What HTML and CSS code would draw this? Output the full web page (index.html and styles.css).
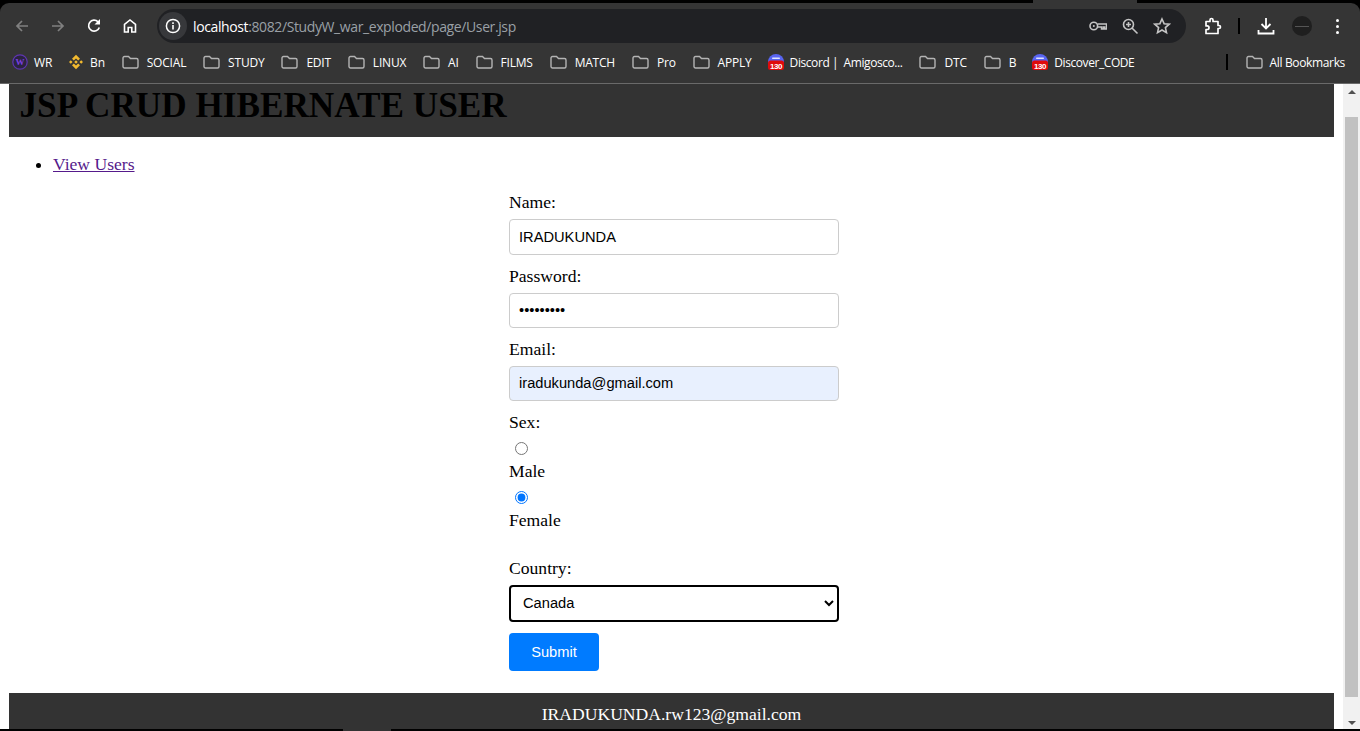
FILE: index.html
```html
<!DOCTYPE html>
<html lang="en">
<head>
<meta charset="utf-8">
<title>User</title>
<link rel="stylesheet" href="styles.css">
</head>
<body>
<svg class="defs" width="0" height="0" aria-hidden="true">
  <symbol id="folder" viewBox="0 0 17 14">
    <path d="M1 3a1.500 1.500 0 0 1 1.500-1.500h4l2 2h6a1.500 1.500 0 0 1 1.500 1.500v6.500a1.500 1.500 0 0 1-1.500 1.500h-12a1.500 1.500 0 0 1-1.500-1.500z" fill="none" stroke="#b4b4b4" stroke-width="1.400"/>
  </symbol>
</svg>
<div class="window">
  <div class="tab-gap"></div>
  <header class="chrome">
    <div class="toolbar">
      <svg class="tb-icon" viewBox="0 0 16 16"><path d="M14 8H3M8 3 3 8l5 5" fill="none" stroke="#808080" stroke-width="1.700"/></svg>
      <svg class="tb-icon" viewBox="0 0 16 16"><path d="M2 8h11M8 3l5 5-5 5" fill="none" stroke="#808080" stroke-width="1.700"/></svg>
      <svg class="tb-icon" viewBox="0 0 16 16"><path d="M13.300 9.500A5.500 5.500 0 1 1 12 3.800" fill="none" stroke="#fff" stroke-width="1.700"/><path d="M14 1v5.500H8.500z" fill="#fff"/></svg>
      <svg class="tb-icon" viewBox="0 0 16 16"><path d="M2.500 14V6.500L8 2l5.500 4.500V14h-3.700V9.500H6.200V14z" fill="none" stroke="#fff" stroke-width="1.600"/></svg>
      <div class="omnibox">
        <span class="info"><svg viewBox="0 0 16 16" width="16" height="16"><circle cx="8" cy="8" r="6.600" fill="none" stroke="#fff" stroke-width="1.500"/><path d="M7.200 7h1.600v4.500H7.200zM7.200 4.300h1.600v1.600H7.200z" fill="#fff"/></svg></span>
        <span class="url"><span class="host">localhost</span>:8082/StudyW_war_exploded/page/User.jsp</span>
        <svg class="omni-icon" viewBox="0 0 18 18"><circle cx="4.800" cy="9" r="3.800" fill="none" stroke="#c4c4c4" stroke-width="1.600"/><circle cx="4.800" cy="9" r="1" fill="#c4c4c4"/><path d="M8.500 7h9v5h-1.800v-2h-1.500v2h-1.700v-2H8.500" fill="none" stroke="#c4c4c4" stroke-width="1.500"/></svg>
        <svg class="omni-icon" viewBox="0 0 18 18"><circle cx="7.500" cy="7.500" r="5" fill="none" stroke="#c4c4c4" stroke-width="1.600"/><path d="m11 11 5.500 5.500M5 7.500h5M7.500 5v5" fill="none" stroke="#c4c4c4" stroke-width="1.600"/></svg>
        <svg class="omni-icon" viewBox="0 0 18 18"><path d="m9 2 2.100 4.700 5.100.5-3.800 3.400 1.100 5L9 13l-4.500 2.600 1.100-5-3.800-3.400 5.100-.5z" fill="none" stroke="#c4c4c4" stroke-width="1.600"/></svg>
      </div>
      <div class="tb-right">
        <svg class="tb-icon" viewBox="0 0 18 18"><path d="M2 4.500h4V3a1.500 1.500 0 0 1 3 0v1.500h5v4h1a1.500 1.500 0 0 1 0 3h-1v5H2v-4h1.200a1.800 1.800 0 0 0 0-3.600H2z" fill="none" stroke="#fff" stroke-width="1.700" stroke-linejoin="round"/></svg>
        <span class="tb-sep"></span>
        <svg class="tb-icon" viewBox="0 0 18 18"><path d="M9 1v10M4.500 7 9 11.500 13.500 7M1.500 13v3.500h15V13" fill="none" stroke="#fff" stroke-width="1.800"/></svg>
        <span class="avatar"><span class="avatar-line"></span></span>
        <span class="dots"><i></i><i></i><i></i></span>
      </div>
    </div>
    <nav class="bookmarks">
      <a class="bm fav"><svg class="bm-icon" viewBox="0 0 16 16"><circle cx="8" cy="8" r="7.200" fill="#2b2440" stroke="#5e35b1" stroke-width="1.200"/><text x="8" y="11" text-anchor="middle" class="wr">W</text></svg>WR</a>
      <a class="bm fav"><svg class="bm-icon" viewBox="0 0 16 16"><path d="M8 .8l4 4-1.800 1.800L8 4.400 5.800 6.600 4 4.800zM8 15.200l-4-4 1.800-1.800L8 11.600l2.200-2.200 1.800 1.800zM2.800 6.200 4.600 8 2.800 9.800 1 8zM13.200 6.200 15 8l-1.800 1.800L11.400 8zM8 6.200 9.800 8 8 9.800 6.200 8z" fill="#f3ba2f"/></svg>Bn</a>
      <a class="bm"><svg class="bm-folder"><use href="#folder"/></svg>SOCIAL</a>
      <a class="bm"><svg class="bm-folder"><use href="#folder"/></svg>STUDY</a>
      <a class="bm"><svg class="bm-folder"><use href="#folder"/></svg>EDIT</a>
      <a class="bm"><svg class="bm-folder"><use href="#folder"/></svg>LINUX</a>
      <a class="bm"><svg class="bm-folder"><use href="#folder"/></svg>AI</a>
      <a class="bm"><svg class="bm-folder"><use href="#folder"/></svg>FILMS</a>
      <a class="bm"><svg class="bm-folder"><use href="#folder"/></svg>MATCH</a>
      <a class="bm"><svg class="bm-folder"><use href="#folder"/></svg>Pro</a>
      <a class="bm"><svg class="bm-folder"><use href="#folder"/></svg>APPLY</a>
      <a class="bm fav tight"><svg class="bm-icon" viewBox="0 0 16 16"><circle cx="8" cy="8" r="8" fill="#5865f2"/><rect x="4" y="3.500" width="8" height="1.500" rx=".7" fill="#dfe3ff"/><rect x="0" y="6.500" width="16" height="9.500" rx="2.500" fill="#e00b0b"/><text x="8" y="14.500" text-anchor="middle" class="badge">130</text></svg>Discord |&nbsp; Amigosco...</a>
      <a class="bm"><svg class="bm-folder"><use href="#folder"/></svg>DTC</a>
      <a class="bm"><svg class="bm-folder"><use href="#folder"/></svg>B</a>
      <a class="bm fav tight"><svg class="bm-icon" viewBox="0 0 16 16"><circle cx="8" cy="8" r="8" fill="#5865f2"/><rect x="4" y="3.500" width="8" height="1.500" rx=".7" fill="#dfe3ff"/><rect x="0" y="6.500" width="16" height="9.500" rx="2.500" fill="#e00b0b"/><text x="8" y="14.500" text-anchor="middle" class="badge">130</text></svg>Discover_CODE</a>
      <span class="bm-spacer"></span>
      <span class="bm-sep"></span>
      <a class="bm bm-all"><svg class="bm-folder"><use href="#folder"/></svg>All Bookmarks</a>
    </nav>
  </header>
  <div class="viewport">
    <main class="page">
      <div class="site-header"><h1>JSP CRUD HIBERNATE USER</h1></div>
      <ul class="links"><li><a href="#">View Users</a></li></ul>
      <div class="form-wrap">
        <form class="user-form" onsubmit="return false">
          <div class="field">
            <label class="lbl" for="name">Name:</label>
            <input class="ctl" id="name" type="text" value="IRADUKUNDA">
          </div>
          <div class="field">
            <label class="lbl" for="pw">Password:</label>
            <input class="ctl" id="pw" type="password" value="secret123">
          </div>
          <div class="field">
            <label class="lbl" for="email">Email:</label>
            <input class="ctl autofilled" id="email" type="email" value="iradukunda@gmail.com">
          </div>
          <div class="group">
            <div class="lbl-plain">Sex:</div>
            <input class="radio" id="male" type="radio" name="sex">
            <label class="radio-lbl" for="male">Male</label>
            <input class="radio" id="female" type="radio" name="sex" checked>
            <label class="radio-lbl" for="female">Female</label>
          </div>
          <div class="field">
            <label class="lbl" for="country">Country:</label>
            <select class="sel" id="country"><option>Canada</option></select>
          </div>
          <button class="submit" type="submit">Submit</button>
        </form>
      </div>
      <footer class="site-footer">IRADUKUNDA.rw123@gmail.com</footer>
    </main>
    <aside class="scrollbar">
      <span class="arrow-up"></span>
      <span class="thumb"></span>
      <span class="arrow-down"></span>
    </aside>
  </div>
  <div class="bottom-edge"><span class="edge"></span><span class="edge-gap"></span><span class="edge"></span></div>
</div>
</body>
</html>
```
FILE: styles.css
```css
* { box-sizing: border-box; }
html, body { margin: 0; padding: 0; height: 100%; overflow: hidden; background: #000; }
.defs { position: absolute; }
.badge { font: bold 8px "Liberation Sans", sans-serif; fill: #fff; }
.wr { font: bold 9px "Liberation Serif", serif; fill: #7b3fe0; }

.window { position: relative; display: flex; flex-direction: column; width: 1360px; height: 731px; padding-top: 3px; background: #000; }
.tab-gap { position: absolute; left: 1033px; top: 0; width: 104px; height: 3px; background: #353535; }

.chrome { flex: none; height: 81px; background: #353535; border-radius: 9px 9px 0 0; border-bottom: 1px solid #6a6a6a; font-family: "Open Sans", "Liberation Sans", sans-serif; color: #fff; }
.toolbar { display: flex; align-items: center; height: 40px; padding: 6px 0 0 14px; }
.tb-icon { width: 16px; height: 16px; flex: none; margin-right: 20px; }
.omnibox { display: flex; align-items: center; width: 1029px; height: 34px; margin-left: -1px; background: #202124; border-radius: 17px; padding: 0 15px 0 2px; }
.info { display: flex; align-items: center; justify-content: center; width: 28px; height: 28px; border-radius: 50%; background: #37383b; margin-right: 6px; }
.url { flex: 1; font-size: 14px; color: #9aa0a6; white-space: nowrap; letter-spacing: -.39px; }
.host { color: #fff; }
.omni-icon { width: 18px; height: 18px; margin-left: 14px; }
.tb-right { display: flex; align-items: center; margin-left: 18px; }
.tb-right .tb-icon { width: 18px; height: 18px; margin-right: 0; }
.tb-sep { width: 2px; height: 16px; margin: 0 17px 0 16px; background: #000; }
.avatar { display: flex; align-items: center; justify-content: center; width: 20px; height: 20px; margin-left: 17px; border-radius: 50%; background: #1f1f1f; }
.avatar-line { width: 14px; height: 1px; background: #555; }
.dots { display: flex; flex-direction: column; gap: 3px; margin-left: 24px; }
.dots i { display: block; width: 3px; height: 3px; border-radius: 50%; background: #fff; }

.bookmarks { display: flex; align-items: center; height: 40px; padding: 0 0 2px 4px; font-size: 12px; white-space: nowrap; }
.bm { display: flex; align-items: center; gap: 8px; padding: 0 8px; letter-spacing: -.2px; }
.bm.fav { gap: 6px; }
.bm.tight { letter-spacing: -.42px; }
.bm-icon { width: 16px; height: 16px; flex: none; }
.bm-folder { width: 17px; height: 14px; flex: none; margin-left: .920px; }
.bm-spacer { flex: 1; }
.bm-sep { width: 2px; height: 16px; background: #000; margin-right: 9px; }
.bm-all { gap: 7px; padding-right: 15px; letter-spacing: -.35px; }

.viewport { flex: none; display: flex; height: 645px; background: #fff; }
.page { flex: 1; min-width: 0; overflow: hidden; padding: 0 9px; font-family: "Liberation Serif", "Times New Roman", serif; font-size: 17.600px; color: #000; }
.site-header { height: 53px; background: #333; padding: 0 10.500px; }
h1 { margin: 0; font-size: 35.200px; line-height: 44px; font-weight: bold; color: #000; }
.links { margin: 17.200px 0 17.100px; padding-left: 44px; }
.links a { color: #551a8b; }
.form-wrap { display: flex; justify-content: center; }
.user-form { width: 335px; padding-left: 5px; }
.field { margin-bottom: 11.100px; }
.lbl { display: block; margin-bottom: 7px; line-height: 20px; }
.ctl { display: block; width: 330px; height: 35.300px; padding: 8px 9px; border: 1px solid #ccc; border-radius: 4px; background: #fff; color: #000; font: 14.667px "Liberation Sans", Arial, sans-serif; outline: none; }
.autofilled { background: #e8f0fe; padding-top: 7px; padding-bottom: 9px; }
.group { margin: -.3px 0 28px; }
.lbl-plain { line-height: 20px; }
.radio { display: block; width: 13px; height: 13px; margin: 10px 0 6px 6px; }
.radio-lbl { display: block; line-height: 20px; }
.sel { display: block; width: 330px; height: 37px; padding: 0 8px 2px; border: 2px solid #000; border-radius: 4px; background: #fff; color: #000; font: 14.667px "Liberation Sans", Arial, sans-serif; outline: none; }
.submit { display: block; width: 90px; height: 38px; padding: 0; border: 0; border-radius: 4px; background: #007bff; color: #fff; font: 14.667px "Liberation Sans", Arial, sans-serif; }
.site-footer { margin-top: 22px; height: 60px; padding-top: 11px; background: #333; color: #fff; text-align: center; line-height: 20px; }

.scrollbar { flex: none; display: flex; flex-direction: column; align-items: center; width: 17px; background: #f1f1f1; padding-top: 6px; }
.arrow-up { width: 0; height: 0; border: 4px solid transparent; border-top: 0; border-bottom: 4px solid #505050; }
.thumb { width: 13px; height: 580px; margin: 23px 0 24px; background: #c1c1c1; }
.arrow-down { width: 0; height: 0; border: 4px solid transparent; border-bottom: 0; border-top: 4px solid #505050; }

.bottom-edge { flex: none; display: flex; height: 2px; background: #000; }
.edge { display: block; }
.edge:first-child { width: 343px; }
.edge-gap { width: 48px; background: #333; }
```
